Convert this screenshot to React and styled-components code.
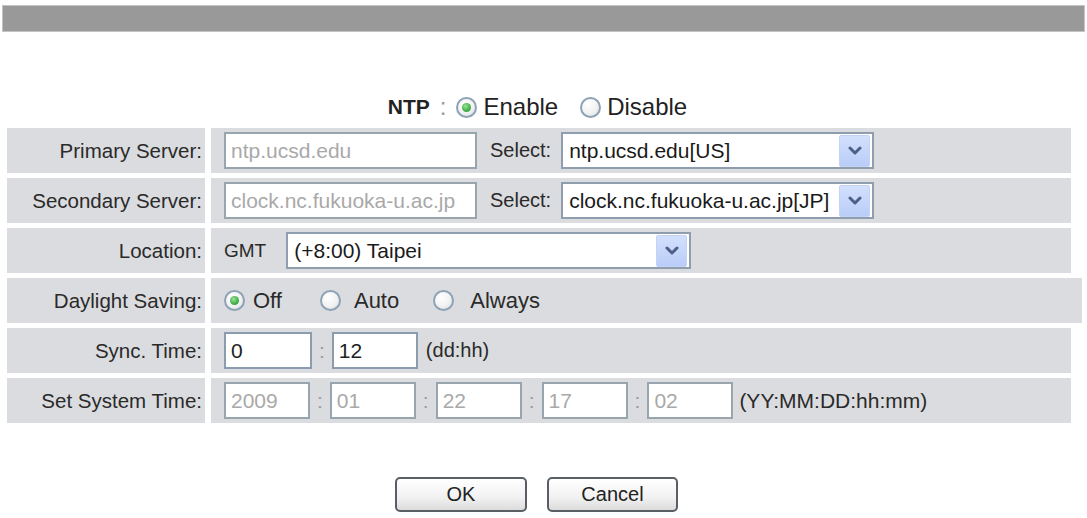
import React from "react";
import styled, { createGlobalStyle } from "styled-components";

const GlobalStyle = createGlobalStyle`
  body {
    margin: 0;
    background: #ffffff;
    font-family: "Liberation Sans", Arial, sans-serif;
    color: #222222;
  }
`;

const Page = styled.div`
  width: 1087px;
  padding-top: 5px;
`;

const TopBar = styled.div`
  height: 25px;
  margin: 0 2px;
  background: #999999;
  border: 1px solid #c4c4c4;
`;

const NtpLine = styled.div`
  margin-top: 60px;
  height: 30px;
  display: flex;
  align-items: center;
  justify-content: center;
  padding-right: 12px;
  font-size: 24px;
`;

const NtpTitle = styled.span`
  font-weight: bold;
  font-size: 21px;
`;

const Colon = styled.span`
  margin: 0 ${(p) => p.$space || 7}px;
  color: ${(p) => (p.$muted ? "#9a9a9a" : "inherit")};
`;

const Table = styled.div`
  margin: 6px 0 0 7px;
  display: flex;
  flex-direction: column;
  gap: 5px;
`;

const Row = styled.div`
  display: grid;
  grid-template-columns: 198px 1fr;
  column-gap: 6px;
  height: 45px;
  width: ${(p) => (p.$wide ? 1075 : 1064)}px;
`;

const Label = styled.div`
  background: #dbdcdf;
  display: flex;
  align-items: center;
  justify-content: flex-end;
  padding-right: 3px;
  font-size: 20.5px;
  color: #2a2a2a;
`;

const Cell = styled.div`
  background: #dbdcdf;
  display: flex;
  align-items: center;
  padding-left: 13px;
  font-size: 21px;
  color: #2a2a2a;
`;

const TextBox = styled.div`
  box-sizing: border-box;
  width: ${(p) => p.$w}px;
  height: 37px;
  background: #ffffff;
  border: 2px solid ${(p) => (p.$disabled ? "#98a4ae" : "#8a9cae")};
  padding-left: 5px;
  display: flex;
  align-items: center;
  font-size: 21px;
  color: ${(p) => (p.$disabled ? "#a9a9a9" : "#1e1e1e")};
  white-space: nowrap;
  overflow: hidden;
`;

const Caption = styled.span`
  margin-left: ${(p) => p.$gap || 0}px;
  margin-right: ${(p) => p.$after || 0}px;
  font-size: ${(p) => p.$size || 21}px;
`;

const SelectBox = styled.div`
  box-sizing: border-box;
  width: ${(p) => p.$w}px;
  height: 37px;
  background: #ffffff;
  border: 2px solid #8e9eaf;
  display: flex;
  align-items: center;
  justify-content: space-between;
  padding: 0 2px 0 6px;
  font-size: 21px;
  color: #1a1a1a;
  white-space: nowrap;
`;

const ArrowButton = styled.div`
  width: 29px;
  height: 30px;
  background: linear-gradient(#d3e0fd, #b9cdf8);
  border: 1px solid #c4d3f5;
  border-radius: 2px;
  display: flex;
  align-items: center;
  justify-content: center;
`;

const RadioGroup = styled.label`
  display: inline-flex;
  align-items: center;
  margin-right: ${(p) => p.$after || 0}px;
  font-size: ${(p) => p.$size || 22}px;
`;

const RadioDot = styled.span`
  position: relative;
  box-sizing: border-box;
  width: 21px;
  height: 21px;
  margin-right: ${(p) => p.$space || 13}px;
  border-radius: 50%;
  border: 2px solid #8ea2b6;
  background: radial-gradient(circle at 35% 30%, #ffffff 0%, #f2f2f2 55%, #d9dde2 100%);

  &::after {
    content: "";
    display: ${(p) => (p.$checked ? "block" : "none")};
    position: absolute;
    left: 4px;
    top: 4px;
    width: 9px;
    height: 9px;
    border-radius: 50%;
    background: radial-gradient(circle at 40% 35%, #9ee29a 0%, #3fae45 60%, #2d8a34 100%);
  }
`;

const Buttons = styled.div`
  margin-top: 54px;
  display: flex;
  justify-content: center;
  gap: 20px;
  padding-right: 14px;
`;

const Button = styled.button`
  box-sizing: border-box;
  width: ${(p) => p.$w || 132}px;
  height: 35px;
  border: 2px solid #5a5f66;
  border-radius: 5px;
  background: linear-gradient(#ffffff, #f1f1f1 60%, #dcdcdc);
  font-family: "Liberation Sans", Arial, sans-serif;
  font-size: 20px;
  color: #222222;
  padding: 0;
`;

const Chevron = () => (
  <svg width="14" height="9" viewBox="0 0 14 9">
    <path d="M2 2 L7 7 L12 2" fill="none" stroke="#4c5f86" strokeWidth="3" strokeLinecap="round" strokeLinejoin="round" />
  </svg>
);

const Dropdown = ({ width, value }) => (
  <SelectBox $w={width}>
    <span>{value}</span>
    <ArrowButton>
      <Chevron />
    </ArrowButton>
  </SelectBox>
);

const Radio = ({ checked, label, space, after, size }) => (
  <RadioGroup $after={after} $size={size}>
    <RadioDot $checked={checked} $space={space} />
    {label}
  </RadioGroup>
);

const systemTime = ["2009", "01", "22", "17", "02"];

export default function App() {
  return (
    <Page>
      <GlobalStyle />
      <TopBar />

      <NtpLine>
        <NtpTitle>NTP</NtpTitle>
        <Colon $space={10} $muted>:</Colon>
        <Radio checked label="Enable" space={6} after={22} size={24} />
        <Radio label="Disable" space={6} size={24} />
      </NtpLine>

      <Table>
        <Row>
          <Label>Primary Server:</Label>
          <Cell>
            <TextBox $w={253} $disabled>ntp.ucsd.edu</TextBox>
            <Caption $gap={13} $after={10} $size={20}>Select:</Caption>
            <Dropdown width={313} value="ntp.ucsd.edu[US]" />
          </Cell>
        </Row>
        <Row>
          <Label>Secondary Server:</Label>
          <Cell>
            <TextBox $w={253} $disabled>clock.nc.fukuoka-u.ac.jp</TextBox>
            <Caption $gap={13} $after={10} $size={20}>Select:</Caption>
            <Dropdown width={313} value="clock.nc.fukuoka-u.ac.jp[JP]" />
          </Cell>
        </Row>
        <Row>
          <Label>Location:</Label>
          <Cell>
            <Caption $after={20} $size={19}>GMT</Caption>
            <Dropdown width={405} value="(+8:00) Taipei" />
          </Cell>
        </Row>
        <Row $wide>
          <Label>Daylight Saving:</Label>
          <Cell>
            <Radio checked label="Off" space={8} after={38} />
            <Radio label="Auto" after={34} />
            <Radio label="Always" space={16} />
          </Cell>
        </Row>
        <Row>
          <Label>Sync. Time:</Label>
          <Cell>
            <TextBox $w={88}>0</TextBox>
            <Colon $muted>:</Colon>
            <TextBox $w={86}>12</TextBox>
            <Caption $gap={8} $size={20}>(dd:hh)</Caption>
          </Cell>
        </Row>
        <Row>
          <Label>Set System Time:</Label>
          <Cell>
            {systemTime.map((v, i) => (
              <React.Fragment key={i}>
                {i > 0 && <Colon $muted>:</Colon>}
                <TextBox $w={86} $disabled>{v}</TextBox>
              </React.Fragment>
            ))}
            <Caption $gap={6} $size={21}>(YY:MM:DD:hh:mm)</Caption>
          </Cell>
        </Row>
      </Table>

      <Buttons>
        <Button>OK</Button>
        <Button $w={131}>Cancel</Button>
      </Buttons>
    </Page>
  );
}
